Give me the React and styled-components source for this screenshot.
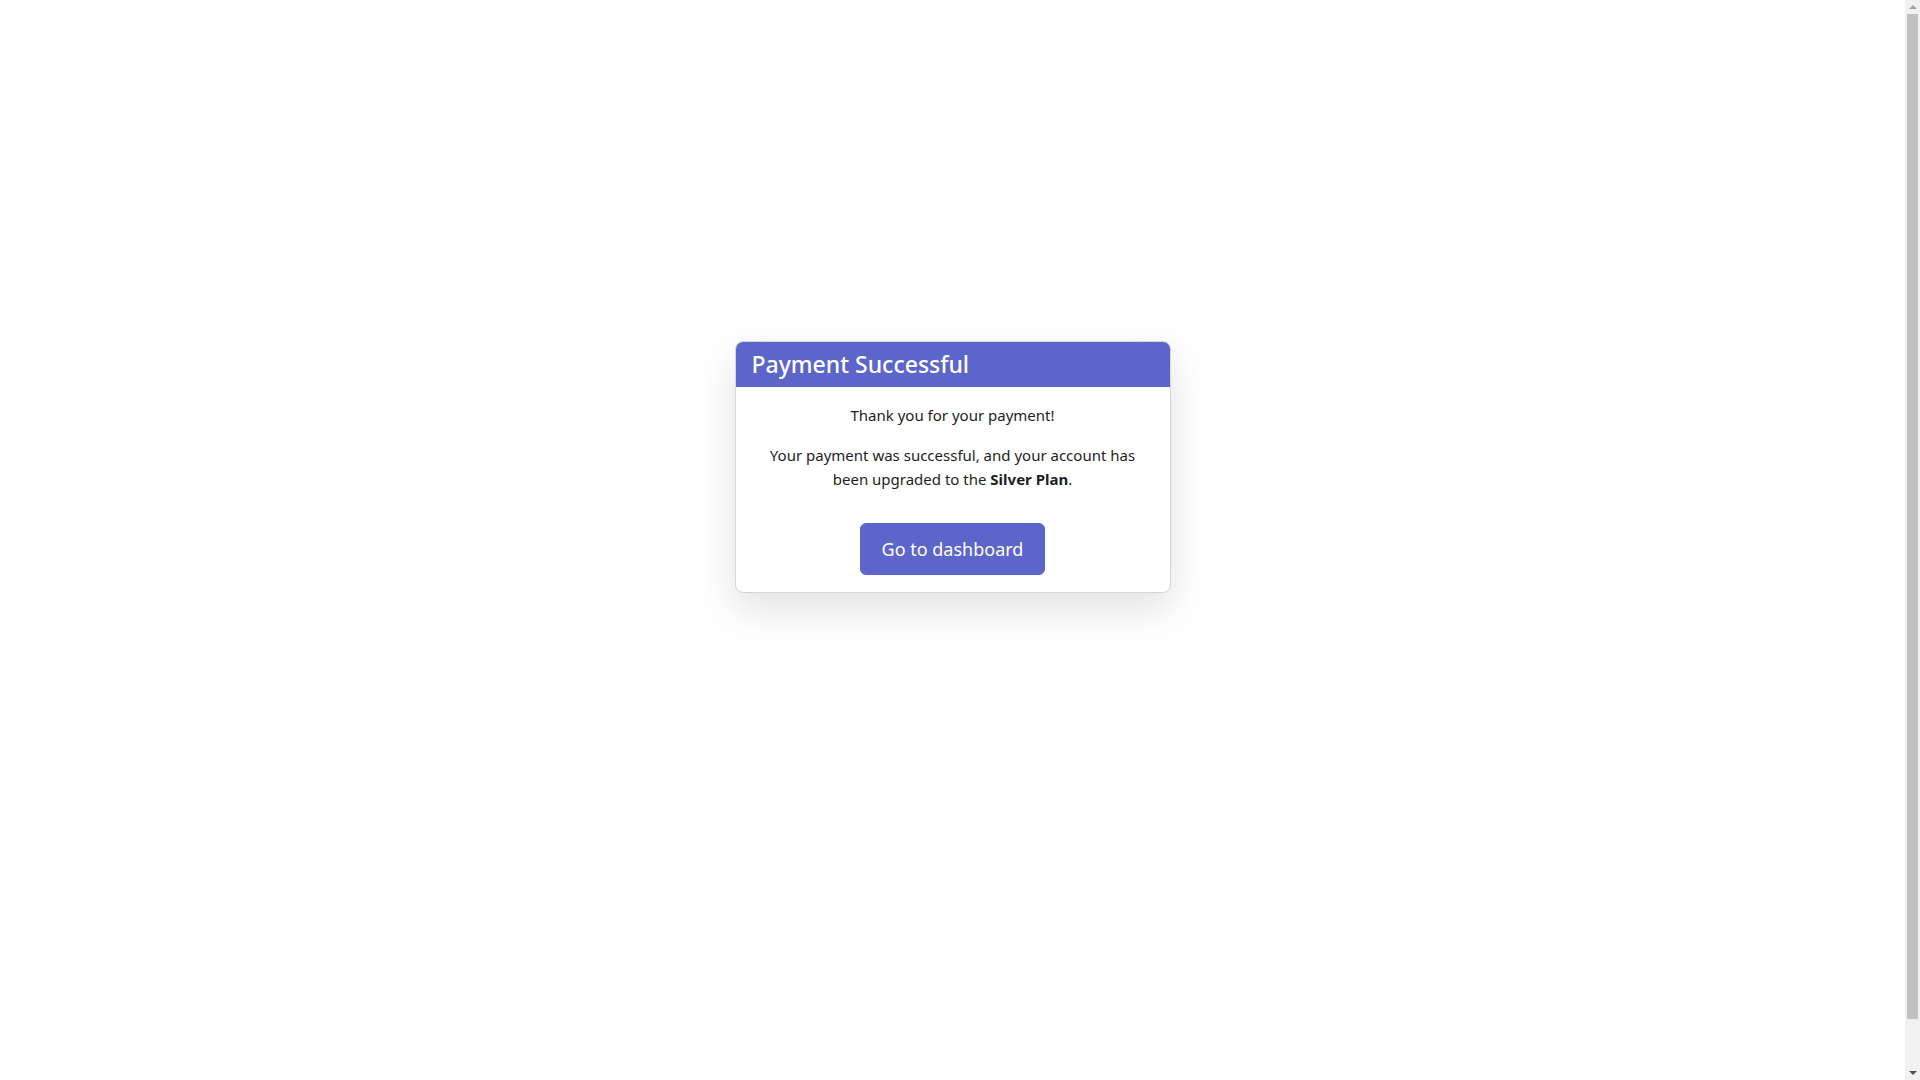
import React from 'react'
import styled, { createGlobalStyle } from 'styled-components'

const GlobalStyle = createGlobalStyle`
  html, body {
    margin: 0;
    overflow: hidden;
  }
  body {
    background: #fff;
    color: #212529;
    font-family: "Noto Sans", "Open Sans", sans-serif;
  }
`;

const Shell = styled.div`
  display: flex;
  height: 100vh;
`;

const Page = styled.main`
  flex: 1;
  box-sizing: border-box;
  padding-bottom: 146px;
  display: flex;
  align-items: center;
  justify-content: center;
`;

// fake classic scrollbar as shown in the screenshot
const ScrollTrack = styled.div`
  width: 15px;
  flex-shrink: 0;
  background: #f1f1f1;
  display: flex;
  flex-direction: column;
  align-items: center;
`;

const ArrowButton = styled.div`
  height: 14px;
  width: 15px;
  display: flex;
  align-items: center;
  justify-content: center;

  &::before {
    content: "";
    border-left: 4px solid transparent;
    border-right: 4px solid transparent;
    ${p => p.$down
        ? 'border-top: 4px solid #505050;'
        : 'border-bottom: 4px solid #a3a3a3;'}
  }
`;

const Thumb = styled.div`
  width: 11px;
  height: 1005px;
  background: #c1c1c1;
`;

const Spacer = styled.div`
  flex: 1;
`;

const Card = styled.div`
  width: 436px;
  box-sizing: border-box;
  border: 1px solid #d6d6d6;
  border-radius: 8px;
  overflow: hidden;
  background: #fff;
  box-shadow: 0 16px 40px rgba(0, 0, 0, 0.12);
`;

const Header = styled.div`
  background: #5c65c9;
  color: #fff;
  padding: 7px 16px 8px;
  font-size: 23px;
  line-height: 30px;
  font-weight: 500;
`;

const Body = styled.div`
  padding: 16px 16px 17px;
  text-align: center;
  font-size: 15px;
  line-height: 24px;
  color: #1e1e1e;
`;

const Text = styled.p`
  margin: 0 0 16px;
  padding: 0 ${p => p.$inset || 0}px;
`;

const Button = styled.button`
  margin-top: 16px;
  padding: 10px 21px;
  border: 1px solid #5c65c9;
  border-radius: 6px;
  background: #5c65c9;
  color: #fff;
  font-family: inherit;
  font-size: 18px;
  line-height: 30px;
  cursor: pointer;
`;

const App = () => {
    return (
        <>
            <GlobalStyle />
            <Shell>
                <Page>
                    <Card>
                        <Header>Payment Successful</Header>
                        <Body>
                            <Text>Thank you for your payment!</Text>
                            <Text $inset={10}>
                                Your payment was successful, and your account has been upgraded to the <b>Silver Plan</b>.
                            </Text>
                            <Button>Go to dashboard</Button>
                        </Body>
                    </Card>
                </Page>
                <ScrollTrack>
                    <ArrowButton />
                    <Thumb />
                    <Spacer />
                    <ArrowButton $down />
                </ScrollTrack>
            </Shell>
        </>
    )
}

export default App
